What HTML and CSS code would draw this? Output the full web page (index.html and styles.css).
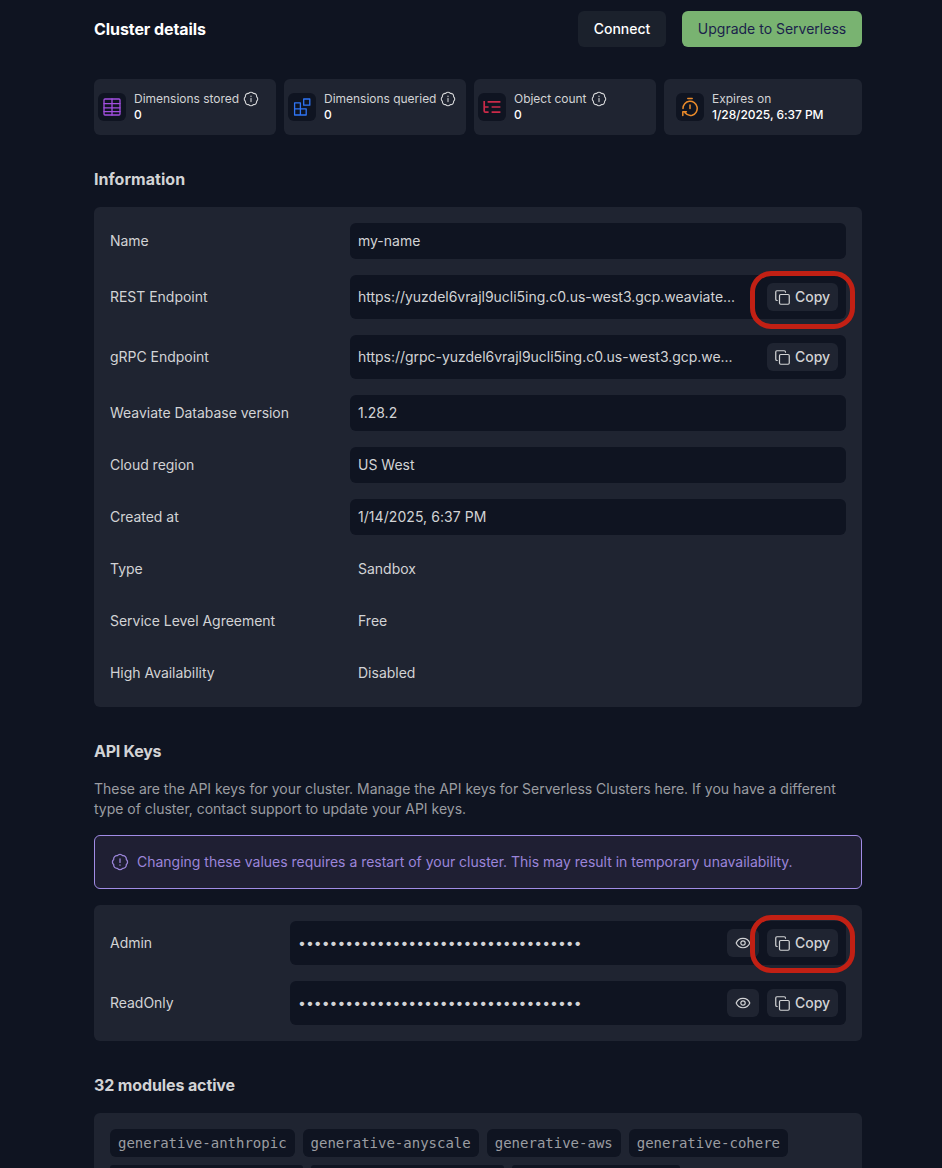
FILE: index.html
```html
<!DOCTYPE html>
<html lang="en">
<head>
<meta charset="utf-8">
<title>Cluster details</title>
<link rel="stylesheet" href="styles.css">
</head>
<body>
<svg class="defs" width="0" height="0" aria-hidden="true">
  <symbol id="copy" viewBox="0 0 16 16"><rect x="4.8" y="4.8" width="10.4" height="10.4" rx="1.3"/><path d="M2.4 11.2C1.4 11.2 .8 10.6 .8 9.8V2C.8 1.2 1.3.8 2 .8H9.8C10.6.8 11.2 1.4 11.2 2.4"/></symbol>
  <symbol id="eye" viewBox="0 0 16 16"><path d="M1.2 8C3.7 1.7 12.3 1.7 14.8 8C12.3 14.3 3.7 14.3 1.2 8Z"/><circle cx="8" cy="8" r="2.2"/></symbol>
  <symbol id="seal" viewBox="0 0 16 16"><path d="M5.7 2.4A2.9 2.9 0 0 1 10.3 2.4A2.9 2.9 0 0 1 13.6 5.7A2.9 2.9 0 0 1 13.6 10.3A2.9 2.9 0 0 1 10.3 13.6A2.9 2.9 0 0 1 5.7 13.6A2.9 2.9 0 0 1 2.4 10.3A2.9 2.9 0 0 1 2.4 5.7A2.9 2.9 0 0 1 5.7 2.4Z"/></symbol>
  <symbol id="info" viewBox="0 0 16 16"><use href="#seal"/><path d="M8 7.4V10.6M8 5.1V5.5"/></symbol>
</svg>
<main class="page">
  <header class="header">
    <h1 class="title t-cluster">Cluster details</h1>
    <button class="btn btn-connect">Connect</button>
    <button class="btn btn-upgrade">Upgrade to Serverless</button>
  </header>

  <section class="stats">
    <div class="stat">
      <span class="tile purple"><svg class="icon20" viewBox="0 0 20 20"><rect x="2" y="2" width="16" height="16" rx="1"/><path d="M10 2V18M2 6.6H18M2 10.8H18M2 14.6H18"/></svg></span>
      <div><div class="stat-label"><span>Dimensions stored</span><svg class="info"><use href="#info"/></svg></div><div class="stat-value">0</div></div>
    </div>
    <div class="stat">
      <span class="tile blue"><svg class="icon20" viewBox="0 0 20 20"><path d="M2.6 5.8H8.4V18H2.6ZM2.6 11.8H14.2V18H2.6M11.7 2H17.8V8.2H11.7Z"/></svg></span>
      <div><div class="stat-label"><span>Dimensions queried</span><svg class="info"><use href="#info"/></svg></div><div class="stat-value">0</div></div>
    </div>
    <div class="stat">
      <span class="tile red"><svg class="icon20" viewBox="0 0 20 20"><path d="M2.2 4V14Q2.2 15.2 3.4 15.2H6.6M2.2 10H6.6M5.6 4.8H18.4M9.6 10H18.4M9.6 15.2H18.4"/></svg></span>
      <div><div class="stat-label"><span>Object count</span><svg class="info"><use href="#info"/></svg></div><div class="stat-value">0</div></div>
    </div>
    <div class="stat stat-wide">
      <span class="tile orange"><svg class="icon20" viewBox="0 0 20 20"><path d="M7.8 1.4H12.2M10 8V11.6M3 11.6A7.1 7.1 0 1 1 12.2 18.2Q8 19.3 5 15.8M2.8 18.4V14.8H6.4"/></svg></span>
      <div><div class="stat-label">Expires on</div><div class="stat-value date">1/28/2025, 6:37 PM</div></div>
    </div>
  </section>

  <h2 class="title t-info">Information</h2>
  <section class="panel">
    <div class="row"><span class="label">Name</span><div class="field">my-name</div></div>
    <div class="row tall"><span class="label">REST Endpoint</span><div class="field"><span class="grow url">https://yuzdel6vrajl9ucli5ing.c0.us-west3.gcp.weaviate...</span><button class="mini copy"><svg class="icon-copy"><use href="#copy"/></svg>Copy</button></div><i class="ring"></i></div>
    <div class="row tall"><span class="label">gRPC Endpoint</span><div class="field"><span class="grow url">https://grpc-yuzdel6vrajl9ucli5ing.c0.us-west3.gcp.we...</span><button class="mini copy"><svg class="icon-copy"><use href="#copy"/></svg>Copy</button></div></div>
    <div class="row"><span class="label">Weaviate Database version</span><div class="field">1.28.2</div></div>
    <div class="row"><span class="label">Cloud region</span><div class="field">US West</div></div>
    <div class="row"><span class="label">Created at</span><div class="field created">1/14/2025, 6:37 PM</div></div>
    <div class="row"><span class="label">Type</span><div class="field plain">Sandbox</div></div>
    <div class="row"><span class="label">Service Level Agreement</span><div class="field plain">Free</div></div>
    <div class="row"><span class="label">High Availability</span><div class="field plain">Disabled</div></div>
  </section>

  <h2 class="title t-keys">API Keys</h2>
  <p class="desc">These are the API keys for your cluster. Manage the API keys for Serverless Clusters here. If you have a different<br>type of cluster, contact support to update your API keys.</p>
  <div class="alert"><svg class="icon18" viewBox="0 0 16 16"><use href="#seal"/><path d="M8 5.2V8.4M8 10.6V10.8"/></svg><span>Changing these values requires a restart of your cluster. This may result in temporary unavailability.</span></div>
  <section class="panel keys">
    <div class="row tall"><span class="label">Admin</span><div class="field"><span class="grow dots">••••••••••••••••••••••••••••••••••••</span><button class="mini eye"><svg class="icon16"><use href="#eye"/></svg></button><button class="mini copy"><svg class="icon-copy"><use href="#copy"/></svg>Copy</button></div><i class="ring"></i></div>
    <div class="row tall"><span class="label">ReadOnly</span><div class="field"><span class="grow dots">••••••••••••••••••••••••••••••••••••</span><button class="mini eye"><svg class="icon16"><use href="#eye"/></svg></button><button class="mini copy"><svg class="icon-copy"><use href="#copy"/></svg>Copy</button></div></div>
  </section>

  <h2 class="title t-mod">32 modules active</h2>
  <section class="panel modules">
    <span class="chip">generative-anthropic</span><span class="chip">generative-anyscale</span><span class="chip">generative-aws</span><span class="chip">generative-cohere</span>
    <span class="chip cut long"></span><span class="chip cut long"></span><span class="chip cut medium"></span>
  </section>
</main>
</body>
</html>
```
FILE: styles.css
```css
* { box-sizing: border-box; }
html, body { margin: 0; height: 1168px; overflow: hidden; }
body { background: #0f1421; color: #d2d3d5; font: 400 14px/20px Inter, "Liberation Sans", sans-serif; }
.defs { position: absolute; }
svg { fill: none; stroke: currentColor; stroke-linecap: round; stroke-linejoin: round; flex: none; display: block; }
button { border: 0; padding: 0; font: inherit; color: inherit; }
.page { width: 768px; margin-left: 94px; padding-top: 11px; }
.header { display: flex; align-items: center; height: 36px; }
.title { margin: 0; font-size: 16px; line-height: 24px; font-weight: 700; white-space: nowrap; }
.header .title { flex: 1; color: #fff; }
.t-cluster { letter-spacing: -0.08px; }
.btn { height: 36px; border-radius: 6px; font-weight: 500; }
.btn-connect { width: 88px; background: #1b212c; color: #fff; margin-right: 16px; }
.btn-upgrade { width: 180px; background: #79b371; color: #1b1f4b; font-weight: 400; }
.stats { display: flex; gap: 8px; margin-top: 32px; }
.stat { width: 182px; height: 56px; padding: 0 4px; display: flex; align-items: center; gap: 8px; border-radius: 6px; background: #1f2431; font-size: 12px; line-height: 16px; white-space: nowrap; }
.stat-wide { width: 198px; padding: 0 12px; }
.tile { width: 28px; height: 28px; border-radius: 6px; background: #0f1421; display: grid; place-items: center; }
.icon20 { width: 20px; height: 20px; stroke-width: 1.3; }
.purple { color: #a24fe0; }
.blue { color: #2f74f5; }
.red { color: #cb2a49; }
.red svg { stroke-width: 1.7; stroke-linecap: butt; }
.orange { color: #e98a2b; }
.orange svg { stroke-width: 1.5; }
.stat-label { display: flex; align-items: center; gap: 4px; }
.stat-label span { letter-spacing: -0.02px; }
.info { width: 16px; height: 16px; stroke-width: 1.1; }
.stat-value { color: #fff; font-weight: 500; }
.date { letter-spacing: -0.06px; }
.t-info { margin-top: 32px; letter-spacing: 0.04px; }
.panel { background: #1f2431; border-radius: 6px; padding: 16px; margin-top: 16px; display: flex; flex-direction: column; gap: 16px; }
.row { position: relative; display: grid; grid-template-columns: 240px 1fr; height: 36px; align-items: center; white-space: nowrap; }
.row.tall { height: 44px; }
.keys .row { grid-template-columns: 180px 1fr; }
.label { letter-spacing: -0.03px; }
.url { letter-spacing: -0.025px; }
.created { letter-spacing: 0.06px; }
.field { height: 100%; background: #0f1421; border-radius: 6px; padding: 0 8px; display: flex; align-items: center; gap: 8px; }
.field.plain { background: transparent; }
.grow { flex: 1; }
.mini { height: 28px; border-radius: 6px; background: #1f2431; display: flex; align-items: center; justify-content: center; font-weight: 500; }
.mini.copy { width: 71px; gap: 5px; letter-spacing: -0.05px; }
.mini.eye { width: 32px; }
.icon16 { width: 16px; height: 16px; stroke-width: 1.2; }
.icon-copy { width: 15px; height: 15px; stroke-width: 1.3; }
.ring { position: absolute; left: 640px; top: -4px; width: 105px; height: 58px; border: 5px solid #c22014; border-radius: 21px; }
.keys .ring { top: -6px; }
.t-keys { margin-top: 32px; letter-spacing: -0.25px; }
.desc { margin: 16px 0 0; color: #9b9da2; white-space: nowrap; letter-spacing: -0.013px; }
.alert { height: 54px; margin-top: 16px; border: 1px solid #a18ce6; border-radius: 6px; background: #1f1f33; color: #9b85da; display: flex; align-items: center; padding-left: 16px; gap: 8px; white-space: nowrap; letter-spacing: -0.01px; }
.icon18 { width: 18px; height: 18px; stroke-width: 1.15; }
.t-mod { margin-top: 32px; letter-spacing: -0.12px; }
.modules { flex-flow: row wrap; gap: 8px; height: 55px; padding-bottom: 0; border-radius: 6px 6px 0 0; overflow: hidden; align-content: flex-start; }
.chip { height: 28px; padding: 0 8px; border-radius: 6px; background: #0f1421; color: #9b9da2; font: 14px/28px "DejaVu Sans Mono", monospace; }
.chip.cut { height: 3px; border-radius: 5px 5px 0 0; }
.chip.long { width: 193px; }
.chip.medium { width: 168px; }
```
